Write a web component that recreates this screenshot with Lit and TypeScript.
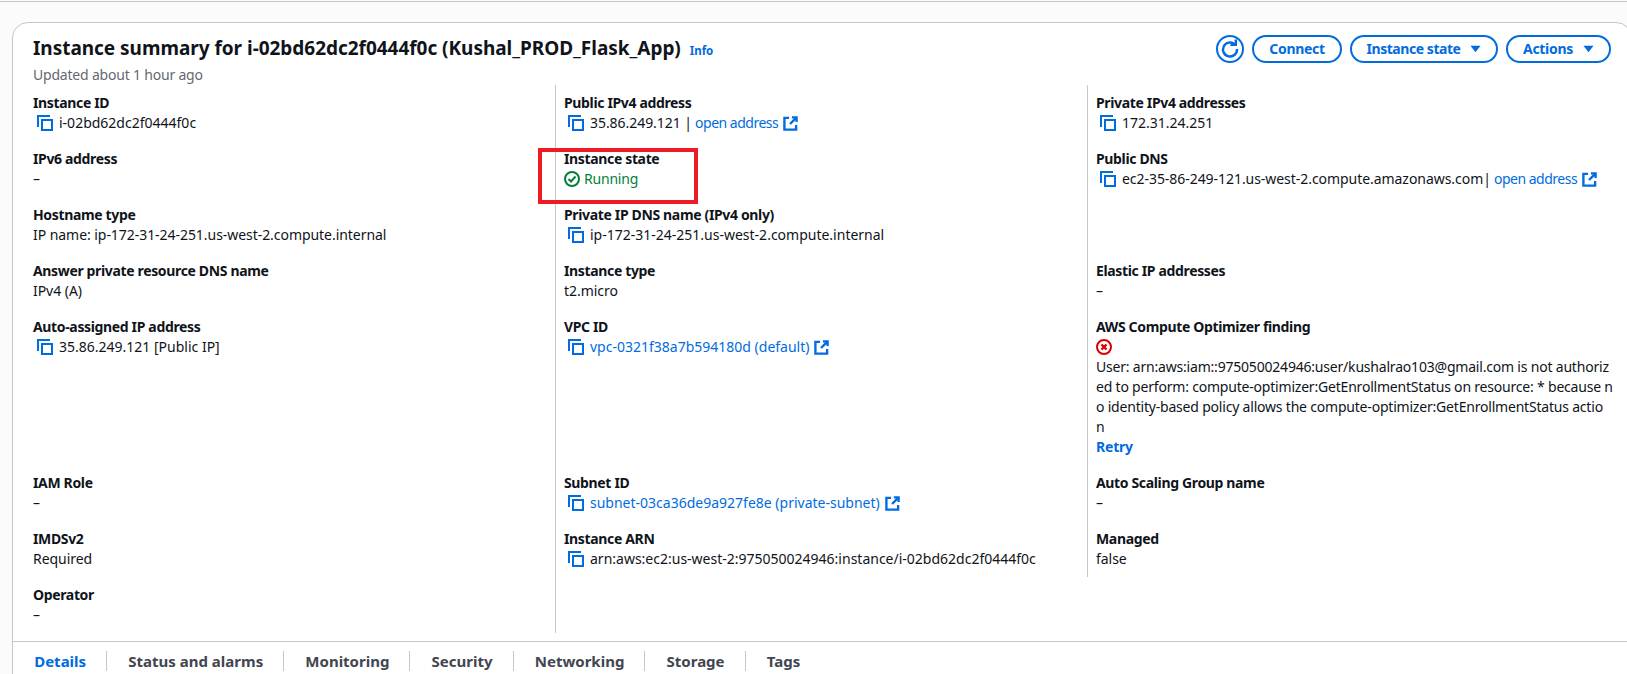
import { LitElement, html, css, svg } from "lit";
import { customElement } from "lit/decorators.js";

const copyIcon = html`<svg class="ico copy" viewBox="0 0 16 16" fill="none" stroke="currentColor" stroke-width="2"><path d="M1 12V1h12"/><rect x="5" y="5" width="10" height="10"/></svg>`;
const extIcon = html`<svg class="ico ext" viewBox="0 0 16 16" fill="none" stroke="currentColor" stroke-width="2.5"><path d="M6.5 2H1.5v12.5H14V9.5"/><path d="M9.5 1.5H14.5V6.5"/><path d="M14 2L7.5 8.5"/></svg>`;
const okIcon = html`<svg class="ico state" viewBox="0 0 16 16" fill="none" stroke="currentColor" stroke-width="2"><circle cx="8" cy="8" r="7"/><path d="M4.5 8L7 10.5L11.5 5.5"/></svg>`;
const errIcon = html`<svg class="ico err" viewBox="0 0 16 16" fill="none" stroke="currentColor" stroke-width="2"><circle cx="8" cy="8" r="7"/><path d="M5.5 5.5L10.5 10.5M10.5 5.5L5.5 10.5" stroke-width="2.4"/></svg>`;
const refreshIcon = svg`<path d="M14.6 5.2A7 7 0 1 0 17 10" fill="none" stroke="currentColor" stroke-width="2.4"/><path d="M10.5 5.8H15.8V0.5" fill="none" stroke="currentColor" stroke-width="2.4"/>`;
const caret = html`<svg class="caret" viewBox="0 0 12 8"><path d="M0.5 0.5H11.5L6 7.5Z" fill="currentColor"/></svg>`;

const tabs = ["Details", "Status and alarms", "Monitoring", "Security", "Networking", "Storage", "Tags"];

@customElement("app-root")
export class AppRoot extends LitElement {
  static styles = css`
    :host {
      display: block;
      height: 674px;
      overflow: hidden;
      background: #fbfbfb;
      font-family: "Noto Sans", "Open Sans", sans-serif;
      font-size: 14px;
      line-height: 20px;
      color: #0f141a;
      box-sizing: border-box;
      padding-top: 1px;
      position: relative;
    }
    .topline { height: 1px; background: #c6c6cd; }
    .card {
      margin: 20px -5px 0 12px;
      background: #fff;
      border: 1px solid #c6c6cd;
      border-radius: 16px;
      height: 680px;
    }
    .head {
      display: flex;
      justify-content: space-between;
      align-items: flex-start;
      padding: 12px 20px 0 20px;
      height: 50px;
      box-sizing: border-box;
    }
    h1 { margin: 0; font-size: 19px; line-height: 26px; font-weight: 700; letter-spacing: -0.03px; }
    .info { font-size: 11.5px; font-weight: 700; color: #006ce0; margin-left: 4px; letter-spacing: 0; }
    .updated { color: #656871; margin-top: 1px; letter-spacing: -0.2px; }
    .btns { display: flex; gap: 8px; }
    .btn {
      height: 28px; box-sizing: border-box; border: 2px solid #006ce0; border-radius: 14px;
      color: #006ce0; font-weight: 700; display: flex; align-items: center; justify-content: center; background: #fff;
      letter-spacing: -0.3px;
    }
    .refresh { width: 28px; }
    .refresh svg { width: 20px; height: 20px; }
    .connect { width: 90px; }
    .istate { width: 148px; gap: 10px; letter-spacing: -0.45px; }
    .actions { width: 105px; gap: 10px; }
    .caret { width: 11px; height: 8px; }
    .grid {
      display: grid;
      grid-template-columns: 542px 532px 1fr;
      grid-template-rows: repeat(4, 56px) 156px repeat(3, 56px);
      margin-top: 12px;
    }
    .cell { padding: 8px 0 0 20px; }
    .cell.b { border-left: 1px solid #c6c6cd; padding-left: 8px; }
    .lab { font-weight: 700; letter-spacing: -0.35px; }
    .val { display: flex; align-items: center; }
    .tight { letter-spacing: -0.05px; }
    .link { color: #006ce0; }
    .open { letter-spacing: -0.5px; }
    .ico { flex: none; }
    .copy { width: 16px; height: 16px; color: #006ce0; margin: 0 6px 0 4px; }
    .ext { width: 15px; height: 15px; color: #006ce0; margin-left: 5px; }
    .state { width: 16px; height: 16px; margin-right: 4px; }
    .running { color: #037f3a; letter-spacing: -0.2px; }
    .err { width: 16px; height: 16px; color: #db0000; display: block; margin-top: 2px; }
    .icoline { height: 18px; }
    .msg { letter-spacing: -0.2px; }
    .retry { color: #006ce0; font-weight: 700; letter-spacing: -0.2px; }
    .mark {
      position: absolute; left: 538px; top: 148px; width: 160px; height: 56px;
      border: 4px solid #ed1c24; box-sizing: border-box; pointer-events: none;
    }
    .tabs {
      margin-top: 8px;
      border-top: 1px solid #c6c6cd;
      display: flex;
      padding: 9px 0 0 0;
    }
    .tab {
      font-size: 15px; font-weight: 700; color: #424650; line-height: 20px;
      padding: 0 20px 0 21.2px; border-left: 1px solid #c6c6cd;
    }
    .tab:first-child { border-left: none; color: #006ce0; }
  `;

  private field(label: string, value: unknown, border: boolean) {
    return html`<div class="cell ${border ? "b" : ""}"><div class="lab">${label}</div>${value}</div>`;
  }

  render() {
    const plain = (t: string) => html`<div class="val tight">${t}</div>`;
    const copy = (t: string) => html`<div class="val">${copyIcon}${t}</div>`;
    const copyLink = (t: string) => html`<div class="val">${copyIcon}<span class="link">${t}</span>${extIcon}</div>`;
    const addr = (t: string, sep: string) =>
      html`<div class="val tight">${copyIcon}<span>${t}${sep}</span><span class="link open">&nbsp;open address</span>${extIcon}</div>`;
    const empty = html`<div class="cell b"></div>`;
    return html`
      <div class="topline"></div>
      <div class="card">
        <div class="head">
          <div>
            <h1>Instance summary for i-02bd62dc2f0444f0c (Kushal_PROD_Flask_App) <span class="info">Info</span></h1>
            <div class="updated">Updated about 1 hour ago</div>
          </div>
          <div class="btns">
            <div class="btn refresh"><svg viewBox="0 0 20 20">${refreshIcon}</svg></div>
            <div class="btn connect">Connect</div>
            <div class="btn istate">Instance state ${caret}</div>
            <div class="btn actions">Actions ${caret}</div>
          </div>
        </div>
        <div class="grid">
          ${this.field("Instance ID", copy("i-02bd62dc2f0444f0c"), false)}
          ${this.field("Public IPv4 address", addr("35.86.249.121", " |"), true)}
          ${this.field("Private IPv4 addresses", copy("172.31.24.251"), true)}

          ${this.field("IPv6 address", plain("–"), false)}
          ${this.field("Instance state", html`<div class="val running">${okIcon}Running</div>`, true)}
          ${this.field("Public DNS", addr("ec2-35-86-249-121.us-west-2.compute.amazonaws.com", "|"), true)}

          ${this.field("Hostname type", plain("IP name: ip-172-31-24-251.us-west-2.compute.internal"), false)}
          ${this.field("Private IP DNS name (IPv4 only)", copy("ip-172-31-24-251.us-west-2.compute.internal"), true)}
          ${empty}

          ${this.field("Answer private resource DNS name", plain("IPv4 (A)"), false)}
          ${this.field("Instance type", plain("t2.micro"), true)}
          ${this.field("Elastic IP addresses", plain("–"), true)}

          ${this.field("Auto-assigned IP address", copy("35.86.249.121 [Public IP]"), false)}
          ${this.field("VPC ID", copyLink("vpc-0321f38a7b594180d (default)"), true)}
          ${this.field(
            "AWS Compute Optimizer finding",
            html`<div class="icoline">${errIcon}</div>
              <div class="msg">
                User: arn:aws:iam::975050024946:user/kushalrao103@gmail.com is not authoriz<br />ed to perform:
                compute-optimizer:GetEnrollmentStatus on resource: * because n<br />o identity-based policy allows the
                compute-optimizer:GetEnrollmentStatus actio<br />n
              </div>
              <div class="retry">Retry</div>`,
            true
          )}

          ${this.field("IAM Role", plain("–"), false)}
          ${this.field("Subnet ID", copyLink("subnet-03ca36de9a927fe8e (private-subnet)"), true)}
          ${this.field("Auto Scaling Group name", plain("–"), true)}

          ${this.field("IMDSv2", plain("Required"), false)}
          ${this.field("Instance ARN", copy("arn:aws:ec2:us-west-2:975050024946:instance/i-02bd62dc2f0444f0c"), true)}
          ${this.field("Managed", plain("false"), true)}

          ${this.field("Operator", plain("–"), false)}
          ${empty}
        </div>
        <div class="tabs">${tabs.map((t) => html`<div class="tab">${t}</div>`)}</div>
      </div>
      <div class="mark"></div>
    `;
  }
}
